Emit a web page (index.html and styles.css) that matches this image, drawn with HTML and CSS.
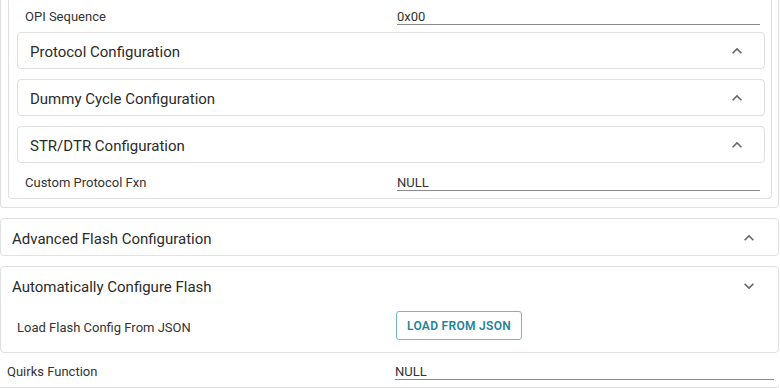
FILE: index.html
```html
<!DOCTYPE html>
<html>
<head>
<meta charset="utf-8">
<link rel="stylesheet" href="styles.css">
</head>
<body>
<div class="page">
  <div class="panel outer">
    <div class="panel inner">
      <div class="row sub">
        <div class="label sub-label">OPI Sequence</div>
        <div class="field sub-field">0x00</div>
      </div>
      <div class="cards">
        <div class="card">
          <div class="card-head sub-head"><span>Protocol Configuration</span>
            <svg class="chev" viewBox="0 0 24 24"><path d="M12 8l-6 6 1.41 1.41L12 10.83l4.59 4.58L18 14z"/></svg>
          </div>
        </div>
        <div class="card">
          <div class="card-head sub-head"><span>Dummy Cycle Configuration</span>
            <svg class="chev" viewBox="0 0 24 24"><path d="M12 8l-6 6 1.41 1.41L12 10.83l4.59 4.58L18 14z"/></svg>
          </div>
        </div>
        <div class="card">
          <div class="card-head sub-head"><span>STR/DTR Configuration</span>
            <svg class="chev" viewBox="0 0 24 24"><path d="M12 8l-6 6 1.41 1.41L12 10.83l4.59 4.58L18 14z"/></svg>
          </div>
        </div>
      </div>
      <div class="row sub custom">
        <div class="label sub-label">Custom Protocol Fxn</div>
        <div class="field sub-field">NULL</div>
      </div>
    </div>
  </div>

  <div class="card top-card adv">
    <div class="card-head"><span>Advanced Flash Configuration</span>
      <svg class="chev" viewBox="0 0 24 24"><path d="M12 8l-6 6 1.41 1.41L12 10.83l4.59 4.58L18 14z"/></svg>
    </div>
  </div>

  <div class="card top-card auto">
    <div class="card-head"><span>Automatically Configure Flash</span>
      <svg class="chev" viewBox="0 0 24 24"><path d="M16.59 8.59L12 13.17 7.41 8.59 6 10l6 6 6-6z"/></svg>
    </div>
    <div class="load-row">
      <div class="label load-label">Load Flash Config From JSON</div>
      <button class="btn">LOAD FROM JSON</button>
    </div>
  </div>

  <div class="row quirks">
    <div class="label quirks-label">Quirks Function</div>
    <div class="field quirks-field">NULL</div>
  </div>
</div>
</body>
</html>
```

FILE: styles.css
```css
* { box-sizing: border-box; }
html, body { margin: 0; padding: 0; background: #fff; }
body {
  font-family: Roboto, "Liberation Sans", sans-serif;
  color: #333;
  overflow: hidden;
}
.page { width: 779px; }

.panel {
  border: 1px solid #e0e0e0;
  border-top: none;
  border-radius: 0 0 4px 4px;
}
.outer { padding: 0 6px 8px 7px; }
.inner { padding: 2px 6px 0 8px; }

.row {
  display: flex;
  align-items: center;
  height: 30px;
}
.label { font-size: 13px; line-height: 14px; color: #333; }
.field {
  font-size: 13px;
  line-height: 14px;
  color: #333;
  border-bottom: 1px solid #8a8a8a;
  padding-top: 1px;
}
.sub-label { width: 380px; padding-left: 8px; flex: none; }
.sub-field { flex: 1; margin-right: 5px; }
.custom { margin-top: 5px; }

.cards { display: flex; flex-direction: column; gap: 10px; }
.card {
  border: 1px solid #e0e0e0;
  border-radius: 4px;
  background: #fff;
}
.card-head {
  height: 35px;
  display: flex;
  align-items: center;
  justify-content: space-between;
  padding: 0 18px 0 12px;
  font-size: 15px;
  color: #2b2b2b;
}
.card-head span { padding-top: 3px; }
.chev { width: 20px; height: 20px; fill: #666; margin-top: 1px; }
.cards .card { height: 37px; }
.sub-head { padding-right: 17px; }

.top-card { margin-top: 10px; }
.adv { height: 38px; }
.adv .card-head { height: 36px; padding-left: 11px; padding-right: 19px; }
.auto { height: 87px; }
.auto .card-head { height: 36px; padding-left: 11px; padding-right: 19px; }
.load-row {
  display: flex;
  align-items: center;
  margin-top: 8px;
  padding-left: 16px;
}
.load-label { width: 379px; flex: none; padding-top: 5px; }
.btn {
  height: 29px;
  padding: 0 10px;
  border: 1px solid #74b6c4;
  border-radius: 3px;
  background: #fff;
  color: #1f8499;
  font-family: Roboto, "Liberation Sans", sans-serif;
  font-size: 12px;
  font-weight: 600;
  letter-spacing: 0.3px;
}

.quirks {
  height: 35px;
  padding: 3px 5px 0 7px;
  border-bottom: 1px solid #e0e0e0;
}
.quirks-label { width: 388px; flex: none; }
.quirks-field { flex: 1; margin-top: 1px; }
```
